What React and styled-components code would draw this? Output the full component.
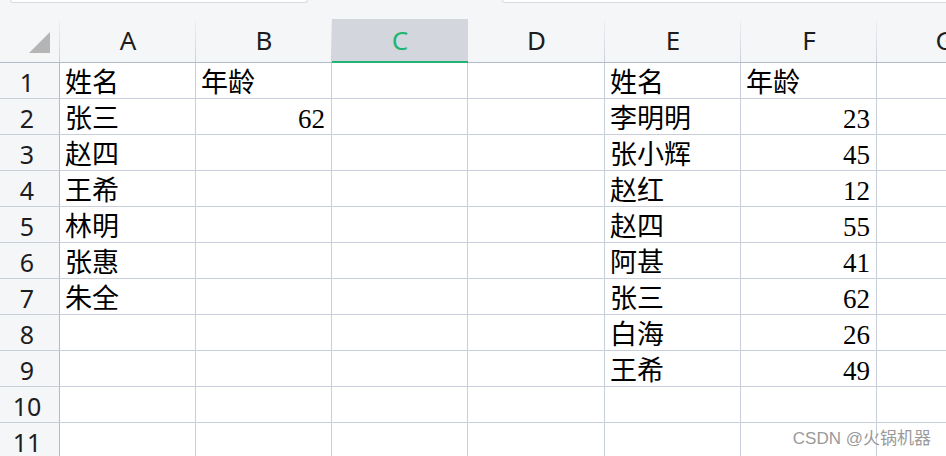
import React from "react";
import styled, { createGlobalStyle, css } from "styled-components";

const GlobalStyle = createGlobalStyle`
  html, body { margin: 0; padding: 0; background: #ffffff; overflow: hidden; }
  * { box-sizing: border-box; }
`;

const COLS = [
  { key: "A", w: 136 },
  { key: "B", w: 136 },
  { key: "C", w: 136, active: true },
  { key: "D", w: 137 },
  { key: "E", w: 136 },
  { key: "F", w: 136 },
  { key: "G", w: 136 },
];

const DATA = {
  1: { A: "姓名", B: "年龄", E: "姓名", F: "年龄" },
  2: { A: "张三", B: 62, E: "李明明", F: 23 },
  3: { A: "赵四", E: "张小辉", F: 45 },
  4: { A: "王希", E: "赵红", F: 12 },
  5: { A: "林明", E: "赵四", F: 55 },
  6: { A: "张惠", E: "阿甚", F: 41 },
  7: { A: "朱全", E: "张三", F: 62 },
  8: { E: "白海", F: 26 },
  9: { E: "王希", F: 49 },
  10: {},
  11: {},
};

const Sheet = styled.div`
  position: relative;
  width: 946px;
  height: 456px;
  overflow: hidden;
  display: flex;
  flex-direction: column;
  background: #ffffff;
`;

const TopStrip = styled.div`
  height: 19px;
  flex: none;
  display: flex;
  align-items: flex-start;
  padding-left: 10px;
  background: #f5f6f8;
  overflow: hidden;
`;

const InputBox = styled.div`
  height: 3px;
  width: ${(p) => (p.$width ? `${p.$width}px` : "auto")};
  flex: ${(p) => (p.$grow ? "1 0 auto" : "none")};
  margin-left: ${(p) => p.$offset || 0}px;
  margin-right: ${(p) => (p.$grow ? "-12px" : "0")};
  background: #ffffff;
  border: 1px solid #d7dae0;
  border-top: none;
  border-radius: 0 0 5px 5px;
`;

const Grid = styled.div`
  display: grid;
  grid-template-columns: 60px ${COLS.map((c) => `${c.w}px`).join(" ")};
  grid-template-rows: 44px repeat(11, 36px);
  flex: none;
`;

const headerBase = css`
  background:
    linear-gradient(to bottom, rgba(200, 205, 218, 0.1), #c9cedb) right top / 1px 100% no-repeat,
    #f5f6f8;
  border-bottom: 1px solid #b3bacb;
`;

const Corner = styled.div`
  ${headerBase}
  display: flex;
  align-items: flex-end;
  justify-content: flex-end;
  padding: 0 10px 9px 0;
`;

const ColHeader = styled.div`
  ${headerBase}
  display: flex;
  justify-content: center;
  padding-top: 1px;
  font-family: "Noto Sans", "Open Sans", sans-serif;
  font-size: 26px;
  line-height: 41px;
  color: #1d1d1f;
  ${(p) =>
    p.$active &&
    css`
      background: #d3d6dc;
      border-bottom: 2px solid #21b573;
      color: #21b573;
    `}
`;

const RowHeader = styled.div`
  background: #f5f6f8;
  border-right: 1px solid #b3bacb;
  border-bottom: 1px solid #c9cedb;
  padding: 3px 5px 0 0;
  text-align: center;
  font-family: "Noto Sans", "Open Sans", sans-serif;
  font-size: 25px;
  line-height: 32px;
  color: #1d1d1f;
`;

const Cell = styled.div`
  border-right: 1px solid #c9cedb;
  border-bottom: 1px solid #c9cedb;
  padding: 5px ${(p) => (p.$num ? "6px" : "4px")} 0 ${(p) => (p.$num ? "4px" : "5px")};
  text-align: ${(p) => (p.$num ? "right" : "left")};
  font-family: "Liberation Serif", "Noto Sans CJK SC", serif;
  font-size: 27px;
  line-height: 30px;
  color: #000000;
  white-space: nowrap;
  overflow: hidden;
`;

const Watermark = styled.div`
  position: absolute;
  right: 15px;
  bottom: 6px;
  font-family: "Liberation Sans", "Noto Sans CJK SC", sans-serif;
  font-size: 17px;
  line-height: 22px;
  color: #9a9a9a;
  white-space: nowrap;
  pointer-events: none;
`;

const CornerMark = () => (
  <svg width="21" height="21" viewBox="0 0 21 21" aria-hidden="true">
    <polygon points="21,0 21,21 0,21" fill="#b5b5b5" />
  </svg>
);

export default function App() {
  const rows = Object.keys(DATA).map(Number);
  return (
    <>
      <GlobalStyle />
      <Sheet>
        <TopStrip>
          <InputBox $width={298} />
          <InputBox $offset={194} $grow />
        </TopStrip>
        <Grid>
          <Corner>
            <CornerMark />
          </Corner>
          {COLS.map((c) => (
            <ColHeader key={c.key} $active={c.active}>
              {c.key}
            </ColHeader>
          ))}
          {rows.map((r) => (
            <React.Fragment key={r}>
              <RowHeader>{r}</RowHeader>
              {COLS.map((c) => {
                const v = DATA[r][c.key];
                return (
                  <Cell key={c.key} $num={typeof v === "number"}>
                    {v}
                  </Cell>
                );
              })}
            </React.Fragment>
          ))}
        </Grid>
        <Watermark>CSDN @火锅机器</Watermark>
      </Sheet>
    </>
  );
}
